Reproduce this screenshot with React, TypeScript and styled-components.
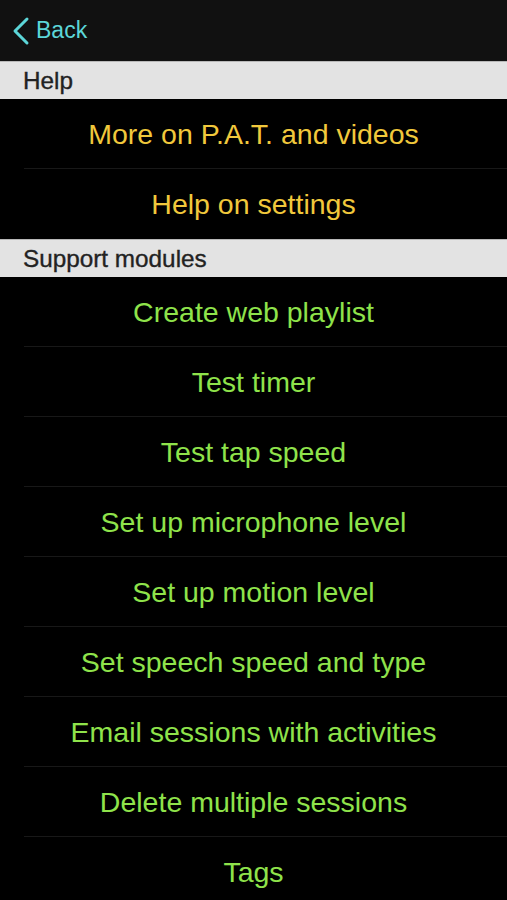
import styled, { createGlobalStyle } from "styled-components";

const GlobalStyle = createGlobalStyle`
  html, body {
    margin: 0;
    padding: 0;
    background: #000;
  }
  body {
    font-family: "Liberation Sans", Arial, sans-serif;
  }
`;

const Screen = styled.div`
  width: 507px;
  height: 900px;
  overflow: hidden;
  background: #000;
`;

const NavBar = styled.div`
  height: 61px;
  background: #111111;
  display: flex;
  align-items: center;
  padding-left: 11px;
  box-sizing: border-box;
`;

const BackButton = styled.button`
  display: flex;
  align-items: center;
  gap: 5px;
  background: none;
  border: none;
  padding: 0;
  color: #5cd6d8;
  font-family: "Liberation Sans", Arial, sans-serif;
  font-size: 23px;
  cursor: pointer;
  svg {
    width: 20px;
    height: 30px;
  }
`;

const SectionHeader = styled.div`
  height: 38px;
  background: #e3e3e3;
  border-top: 1px solid #b8b8b8;
  color: #222;
  font-size: 24.3px;
  -webkit-text-stroke: 0.35px #222;
  padding-left: 23px;
  display: flex;
  align-items: center;
  box-sizing: border-box;
`;

const Row = styled.div<{ $tone: "yellow" | "green"; $last?: boolean }>`
  height: 70px;
  display: flex;
  align-items: center;
  justify-content: center;
  font-size: 28.5px;
  color: ${(p) => (p.$tone === "yellow" ? "#f1c83c" : "#8fe34b")};
  position: relative;
  &::after {
    content: "";
    display: ${(p) => (p.$last ? "none" : "block")};
    position: absolute;
    left: 24px;
    right: 0;
    bottom: 0;
    height: 1px;
    background: #181818;
  }
`;

const helpItems = ["More on P.A.T. and videos", "Help on settings"];
const supportItems = [
  "Create web playlist",
  "Test timer",
  "Test tap speed",
  "Set up microphone level",
  "Set up motion level",
  "Set speech speed and type",
  "Email sessions with activities",
  "Delete multiple sessions",
  "Tags",
];

export default function App() {
  return (
    <Screen>
      <GlobalStyle />
      <NavBar>
        <BackButton>
          <svg viewBox="0 0 20 30" fill="none" stroke="currentColor" strokeWidth={3} strokeLinecap="round" strokeLinejoin="round">
            <path d="M16 3L4 15l12 12" />
          </svg>
          Back
        </BackButton>
      </NavBar>
      <SectionHeader>Help</SectionHeader>
      {helpItems.map((t, i) => (
        <Row key={t} $tone="yellow" $last={i === helpItems.length - 1}>
          {t}
        </Row>
      ))}
      <SectionHeader>Support modules</SectionHeader>
      {supportItems.map((t) => (
        <Row key={t} $tone="green">
          {t}
        </Row>
      ))}
    </Screen>
  );
}
